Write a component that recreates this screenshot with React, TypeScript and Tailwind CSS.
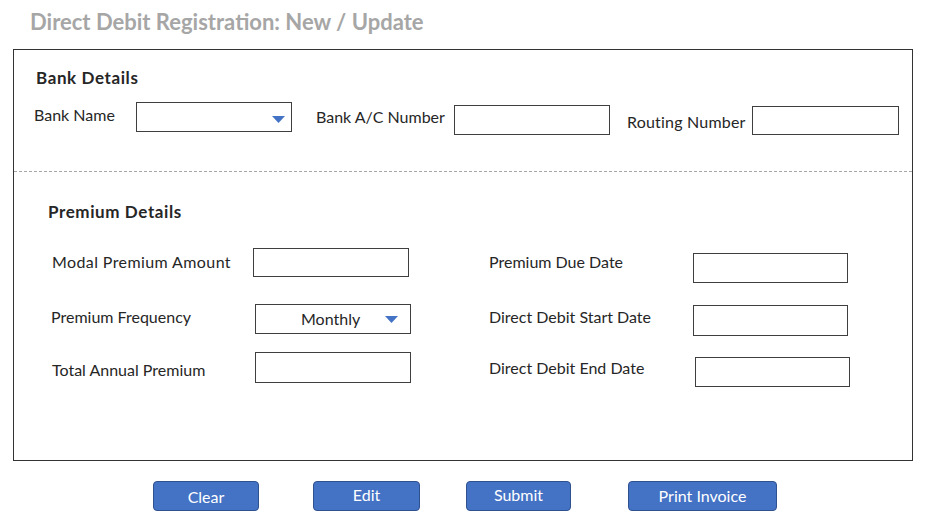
import React from 'react';

const Caret = () => (
  <svg width="13" height="7" viewBox="0 0 13 7" className="shrink-0">
    <polygon points="0,0 13,0 6.5,7" fill="#4472c4" />
  </svg>
);

const Box = ({ className = '' }: { className?: string }) => (
  <div className={`border border-[#3f3f3f] bg-white ${className}`} />
);

const App: React.FC = () => {
  return (
    <div className="w-[935px] h-[527px] bg-white font-['Lato',sans-serif] text-[16px] leading-[20px] text-[#262626]">
      {/* Title */}
      <h1 className="pl-[30px] pt-[9px] text-[22px] leading-[26px] font-bold text-[#a6a6a6]">
        Direct Debit Registration: New / Update
      </h1>

      {/* Form panel */}
      <div className="ml-[13px] mt-[14px] w-[900px] h-[412px] border border-[#333]">
        {/* Bank details */}
        <div className="h-[122px] border-b border-dashed border-[#a6a6a6] pt-[18px]">
          <div className="pl-[22px] font-bold text-[17px] tracking-[0.6px]">Bank Details</div>
          <div className="flex items-start mt-[14px] pl-[20px]">
            <span className="w-[102px] mt-[3px]">Bank Name</span>
            <div className="w-[156px] h-[30px] border border-[#3f3f3f] flex items-center justify-end pr-[6px] pt-[4px]">
              <Caret />
            </div>
            <span className="ml-[24px] w-[138px] mt-[5px]">Bank A/C Number</span>
            <Box className="w-[156px] h-[30px] mt-[3px]" />
            <span className="ml-[17px] w-[125px] mt-[10px] tracking-[0.2px]">Routing Number</span>
            <Box className="w-[147px] h-[29px] mt-[4px]" />
          </div>
        </div>

        {/* Premium details */}
        <div className="pt-[30px]">
          <div className="pl-[34px] font-bold text-[17px] tracking-[0.6px]">Premium Details</div>

          <div className="flex items-start mt-[26px] pl-[38px] h-[56px]">
            <span className="w-[201px] mt-[4px] tracking-[0.4px]">Modal Premium Amount</span>
            <Box className="w-[156px] h-[29px]" />
            <span className="ml-[80px] w-[204px] mt-[4px]">Premium Due Date</span>
            <Box className="w-[155px] h-[30px] mt-[5px]" />
          </div>

          <div className="flex items-start pl-[37px] h-[48px]">
            <span className="w-[204px] mt-[3px]">Premium Frequency</span>
            <div className="w-[156px] h-[30px] border border-[#3f3f3f] flex items-center pl-[45px] pr-[12px]">
              <span className="flex-1">Monthly</span>
              <Caret />
            </div>
            <span className="ml-[78px] w-[204px] mt-[3px]">Direct Debit Start Date</span>
            <Box className="w-[155px] h-[31px] mt-[1px]" />
          </div>

          <div className="flex items-start pl-[38px]">
            <span className="w-[203px] mt-[8px]">Total Annual Premium</span>
            <Box className="w-[156px] h-[31px]" />
            <span className="ml-[78px] w-[206px] mt-[6px]">Direct Debit End Date</span>
            <Box className="w-[155px] h-[30px] mt-[5px]" />
          </div>
        </div>
      </div>

      {/* Actions */}
      <div className="flex items-center mt-[20px] pl-[153px]">
        <button className="w-[106px] h-[30px] rounded-[4px] bg-[#4472c4] border border-[#2f528f] text-white pt-[1px]">Clear</button>
        <button className="ml-[54px] w-[107px] h-[30px] rounded-[4px] bg-[#4472c4] border border-[#2f528f] text-white pb-[2px]">Edit</button>
        <button className="ml-[46px] w-[105px] h-[30px] rounded-[4px] bg-[#4472c4] border border-[#2f528f] text-white pb-[2px]">Submit</button>
        <button className="ml-[57px] w-[149px] h-[30px] rounded-[4px] bg-[#4472c4] border border-[#2f528f] text-white">Print Invoice</button>
      </div>
    </div>
  );
};

export default App;
